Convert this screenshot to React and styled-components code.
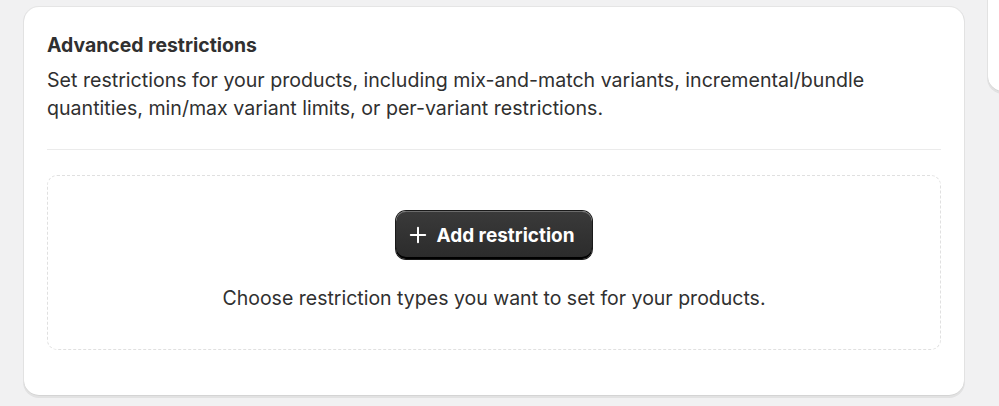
import styled, { createGlobalStyle } from 'styled-components';

const GlobalStyle = createGlobalStyle`
  html, body {
    margin: 0;
    padding: 0;
    background: #f1f1f2;
    font-family: Inter, "Noto Sans", sans-serif;
    color: #303030;
    overflow: hidden;
  }
`;

const Page = styled.div`
  display: flex;
  align-items: flex-start;
  gap: 24px;
  padding: 6px 0 0 24px;
  width: 999px;
  height: 406px;
  box-sizing: border-box;
  overflow: hidden;
`;

const Card = styled.section`
  flex: 0 0 940px;
  box-sizing: border-box;
  background: #fff;
  border-radius: 15px;
  padding: 27px 23px 23px;
  box-shadow: 0 1px 0 1px rgba(26, 26, 26, 0.07), 0 1px 0 0 rgba(204, 204, 204, 0.5) inset,
    0 -1px 0 0 rgba(0, 0, 0, 0.17) inset;
  height: 390px;
`;

const SideCard = styled.div`
  flex: 0 0 120px;
  margin-top: -30px;
  height: 116px;
  background: #fff;
  border-radius: 15px;
  box-shadow: 0 1px 0 1px rgba(26, 26, 26, 0.07), 0 -1px 0 0 rgba(0, 0, 0, 0.17) inset;
`;

const Title = styled.h2`
  margin: 0 0 9px;
  font-size: 19.4px;
  font-weight: 650;
  line-height: 24px;
`;

const Description = styled.p`
  margin: 0;
  font-size: 19.6px;
  line-height: 28px;
  font-weight: 400;
`;

const Divider = styled.hr`
  border: none;
  border-top: 1px solid #ebebeb;
  margin: 27px 0 25px;
`;

const Dropzone = styled.div`
  box-sizing: border-box;
  height: 175px;
  border: 1px dashed #e0e0e0;
  border-radius: 10px;
  display: flex;
  flex-direction: column;
  align-items: center;
  padding-top: 35px;
  gap: 27px;
`;

const PrimaryButton = styled.button`
  display: inline-flex;
  align-items: center;
  gap: 9px;
  height: 48px;
  padding: 0 17px 0 13px;
  border: none;
  border-radius: 10px;
  background: linear-gradient(180deg, #3a3a3a 0%, #2b2b2b 100%);
  box-shadow: 0 -2px 0 0 #000 inset, 0 0 0 1px #1a1a1a, 0 1px 0 0 rgba(255, 255, 255, 0.25) inset;
  color: #fff;
  font-family: inherit;
  font-size: 19px;
  font-weight: 650;
  cursor: pointer;
`;

const Caption = styled.p`
  margin: 0;
  font-size: 19.5px;
  line-height: 24px;
`;

function PlusIcon() {
  return (
    <svg width="18" height="18" viewBox="0 0 18 18" fill="none">
      <path d="M9 1.8v14.4M1.8 9h14.4" stroke="#fff" strokeWidth="2" strokeLinecap="round" />
    </svg>
  );
}

export default function App() {
  return (
    <>
      <GlobalStyle />
      <Page>
        <Card>
          <Title>Advanced restrictions</Title>
          <Description>
            Set restrictions for your products, including mix-and-match variants, incremental/bundle
            quantities, min/max variant limits, or per-variant restrictions.
          </Description>
          <Divider />
          <Dropzone>
            <PrimaryButton type="button">
              <PlusIcon />
              Add restriction
            </PrimaryButton>
            <Caption>Choose restriction types you want to set for your products.</Caption>
          </Dropzone>
        </Card>
        <SideCard />
      </Page>
    </>
  );
}
